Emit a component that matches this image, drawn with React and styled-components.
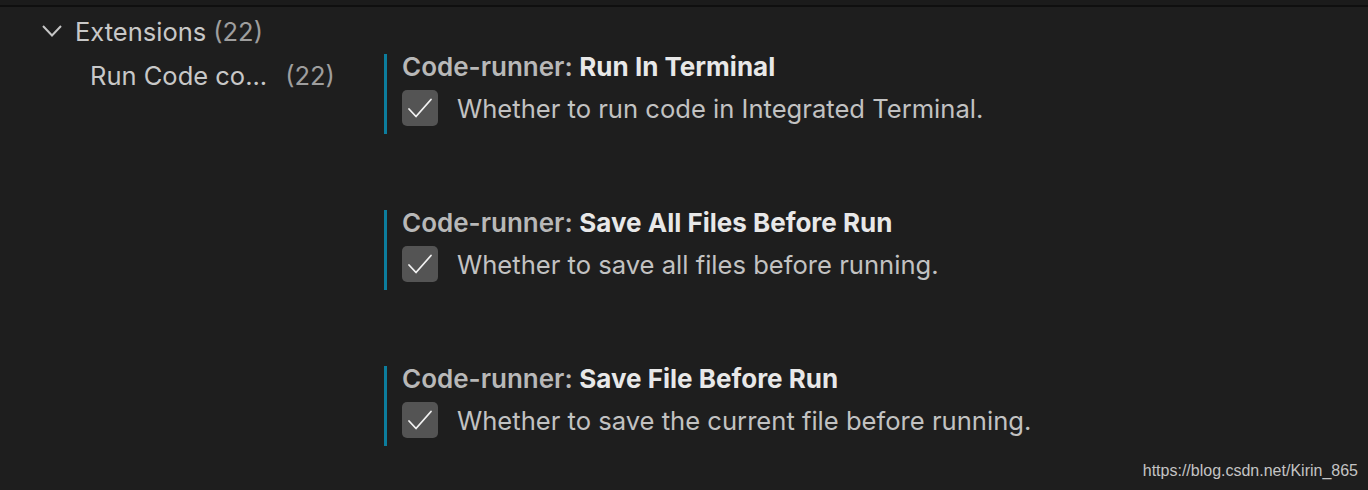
import React from "react";
import styled, { createGlobalStyle } from "styled-components";

const Global = createGlobalStyle`
  html, body { margin: 0; padding: 0; background: #1e1e1e; }
  body { font-family: Inter, "Noto Sans", sans-serif; -webkit-font-smoothing: antialiased; }
`;

const Page = styled.div`
  position: relative;
  width: 1368px;
  height: 490px;
  background: #1e1e1e;
  overflow: hidden;
`;

const TopStrip = styled.div`
  height: 5px;
  background: #1b1b1b;
  border-bottom: 2px solid #0f0f0f;
`;

const Body = styled.div`
  display: flex;
`;

const Sidebar = styled.div`
  width: 384px;
  flex-shrink: 0;
  padding-top: 6px;
`;

const TreeRow = styled.div`
  display: flex;
  align-items: center;
  height: ${p => p.$h}px;
  padding-left: ${p => p.$indent}px;
  font-size: 25.5px;
  color: #c8c8c8;
  white-space: nowrap;
`;

const Chevron = styled.svg`
  width: 20px;
  height: 12px;
  margin-right: 13px;
`;

const Count = styled.span`
  color: #9e9e9e;
  margin-left: ${p => p.$gap || 7}px;
`;

const Content = styled.div`
  flex: 1;
  padding-top: 47px;
  display: flex;
  flex-direction: column;
  gap: 76px;
`;

const Setting = styled.div`
  height: 80px;
  border-left: 3px solid #0c7d9d;
  padding-left: 15px;
  display: flex;
  flex-direction: column;
`;

const Title = styled.div`
  font-size: 26px;
  font-weight: 600;
  color: #b8b8b8;
  line-height: 28px;
  margin-top: -1px;
`;

const Label = styled.span`
  color: #e8e8e8;
  font-weight: 700;
`;

const Row = styled.div`
  display: flex;
  align-items: center;
  margin-top: 9px;
`;

const Box = styled.div`
  width: 36px;
  height: 36px;
  border-radius: 5px;
  background: #545454;
  display: flex;
  align-items: center;
  justify-content: center;
  margin-right: 19px;
`;

const Desc = styled.span`
  font-size: 25.6px;
  color: #c2c2c2;
`;

const Watermark = styled.div`
  position: absolute;
  right: 10px;
  bottom: 10px;
  font-family: "Liberation Sans", Arial, sans-serif;
  font-size: 16px;
  color: #c4c4c4;
`;

const settings = [
  { label: "Run In Terminal", desc: "Whether to run code in Integrated Terminal." },
  { label: "Save All Files Before Run", desc: "Whether to save all files before running." },
  { label: "Save File Before Run", desc: "Whether to save the current file before running." },
];

const Check = () => (
  <svg width="26" height="22" viewBox="0 0 26 22">
    <path d="M2 12 L9 19.5 L24 2.5" fill="none" stroke="#f2f2f2" strokeWidth="1.8" strokeLinecap="round" strokeLinejoin="round" />
  </svg>
);

export default function App() {
  return (
    <Page>
      <Global />
      <TopStrip />
      <Body>
        <Sidebar>
          <TreeRow $h={36} $indent={42}>
            <Chevron viewBox="0 0 20 12">
              <path d="M1 1 L10 10.5 L19 1" fill="none" stroke="#c5c5c5" strokeWidth="2" />
            </Chevron>
            Extensions<Count>(22)</Count>
          </TreeRow>
          <TreeRow $h={52} $indent={90}>
            Run Code co...<Count $gap={18}>(22)</Count>
          </TreeRow>
        </Sidebar>
        <Content>
          {settings.map(s => (
            <Setting key={s.label}>
              <Title>
                Code-runner: <Label>{s.label}</Label>
              </Title>
              <Row>
                <Box>
                  <Check />
                </Box>
                <Desc>{s.desc}</Desc>
              </Row>
            </Setting>
          ))}
        </Content>
      </Body>
      <Watermark>https://blog.csdn.net/Kirin_865</Watermark>
    </Page>
  );
}
